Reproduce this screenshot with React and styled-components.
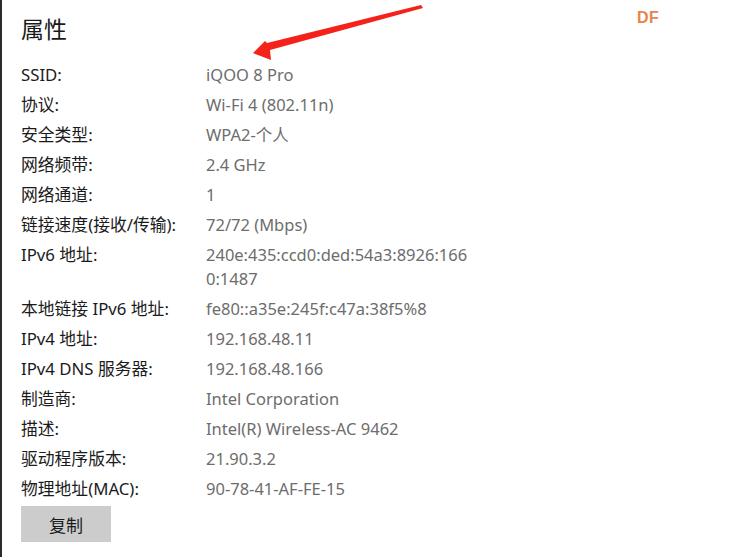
import React from "react";
import styled, { createGlobalStyle } from "styled-components";

const GlobalStyle = createGlobalStyle`
  html, body {
    margin: 0;
    padding: 0;
    background: #ffffff;
  }
  body {
    font-family: "Noto Sans", "Noto Sans CJK SC", sans-serif;
  }
`;

const Page = styled.div`
  position: relative;
  width: 743px;
  height: 557px;
  overflow: hidden;
  box-sizing: border-box;
  border-left: 2px solid #2b2b2b;
  padding: 13px 0 0 19px;
`;

const Title = styled.h1`
  margin: 0 0 20px;
  font-size: 23px;
  font-weight: 400;
  line-height: 30px;
  color: #1a1a1a;
  font-family: "Noto Sans CJK SC", sans-serif;
`;

const List = styled.div`
  display: grid;
  grid-template-columns: 185px 268px;
  row-gap: 6px;
`;

const Label = styled.div`
  font-size: 16.8px;
  line-height: 24px;
  color: #1b1b1b;
  white-space: nowrap;
`;

const Value = styled.div`
  font-size: 16.5px;
  line-height: 24px;
  color: #6d6d6d;
  word-break: break-all;
`;

const CopyButton = styled.button`
  margin-top: 5px;
  width: 90px;
  height: 36px;
  border: none;
  background: #cccccc;
  color: #1a1a1a;
  font-family: "Noto Sans CJK SC", sans-serif;
  font-size: 17px;
  padding: 0;
`;

const Logo = styled.div`
  position: absolute;
  left: 635px;
  top: 9px;
  font-family: "Liberation Sans", sans-serif;
  font-weight: 700;
  font-size: 16px;
  color: #e9824c;
  letter-spacing: 0.5px;
`;

const Arrow = styled.svg`
  position: absolute;
  left: 0;
  top: 0;
  pointer-events: none;
`;

const rows = [
  ["SSID:", "iQOO 8 Pro"],
  ["协议:", "Wi-Fi 4 (802.11n)"],
  ["安全类型:", "WPA2-个人"],
  ["网络频带:", "2.4 GHz"],
  ["网络通道:", "1"],
  ["链接速度(接收/传输):", "72/72 (Mbps)"],
  ["IPv6 地址:", "240e:435:ccd0:ded:54a3:8926:1660:1487"],
  ["本地链接 IPv6 地址:", "fe80::a35e:245f:c47a:38f5%8"],
  ["IPv4 地址:", "192.168.48.11"],
  ["IPv4 DNS 服务器:", "192.168.48.166"],
  ["制造商:", "Intel Corporation"],
  ["描述:", "Intel(R) Wireless-AC 9462"],
  ["驱动程序版本:", "21.90.3.2"],
  ["物理地址(MAC):", "90-78-41-AF-FE-15"],
];

export default function App() {
  return (
    <>
      <GlobalStyle />
      <Page>
        <Title>属性</Title>
        <List>
          {rows.map(([k, v]) => (
            <React.Fragment key={k}>
              <Label>{k}</Label>
              <Value>{v}</Value>
            </React.Fragment>
          ))}
        </List>
        <CopyButton>复制</CopyButton>
        <Logo>DF</Logo>
        <Arrow width="743" height="80" viewBox="0 0 743 80">
          <path
            d="M419 5 L421 8 L268 50 L269 60 L251 53 L263 41 L265 43 Z"
            fill="#f5221b"
          />
        </Arrow>
      </Page>
    </>
  );
}
